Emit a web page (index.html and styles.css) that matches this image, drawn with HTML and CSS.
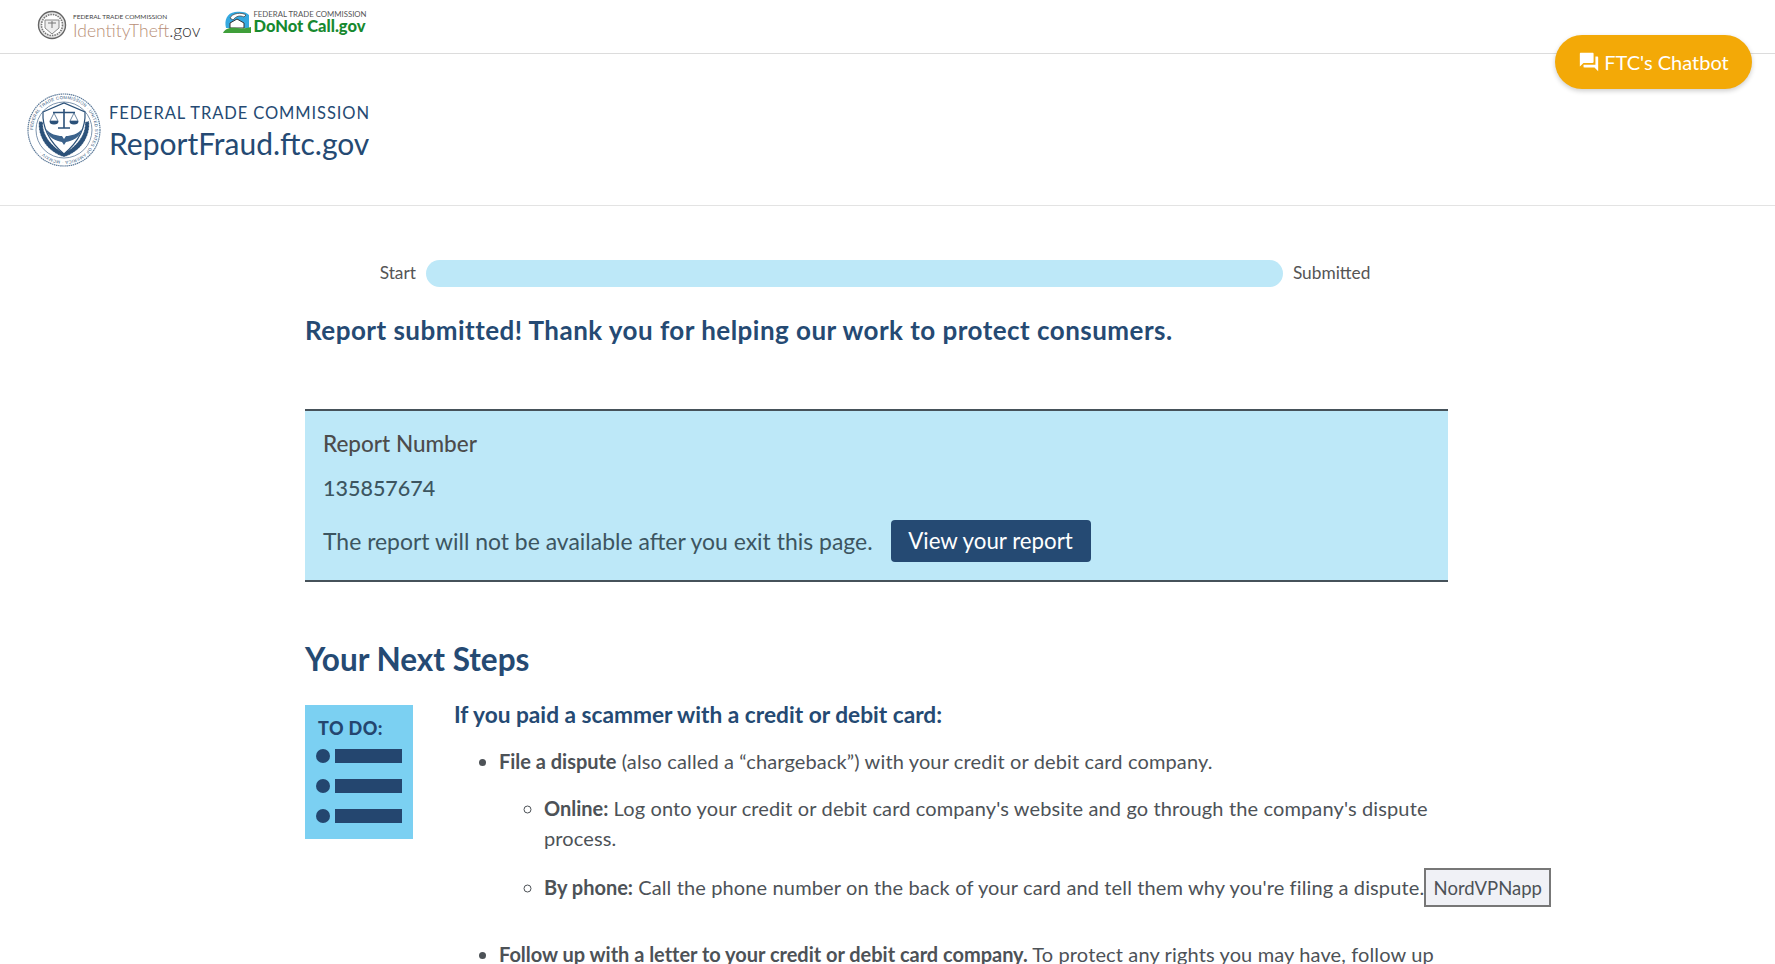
FILE: index.html
```html
<!DOCTYPE html>
<html lang="en">
<head>
<meta charset="utf-8">
<title>Report submitted | ReportFraud.ftc.gov</title>
<link rel="stylesheet" href="styles.css">
</head>
<body>
<div class="topbar">
  <a class="mini-logo it">
    <svg class="mini-seal" width="30" height="30" viewBox="0 0 30 30"><circle cx="15" cy="15" r="13.5" fill="#e6e6e6" stroke="#666" stroke-width="1.4"/><circle cx="15" cy="15" r="10.5" fill="#fff" stroke="#777" stroke-width="1.6" stroke-dasharray="1.5 1"/><path d="M8 10h14v8l-7 6-7-6z" fill="#eee" stroke="#888"/><path d="M11 13h8M15 11v7" stroke="#777"/></svg>
    <span class="mini-text"><span class="mini-ftc">FEDERAL TRADE COMMISSION</span><span class="it-name"><span class="tan">IdentityTheft</span>.gov</span></span>
  </a>
  <a class="mini-logo dnc">
    <svg width="28" height="24" viewBox="0 0 28 24"><path d="M3 18C1 10 4 3 12 2c6-1 12 0 14 3v13z" fill="#35a9e0"/><path d="M7 8c2-5 12-6 16-3l-2 2c-4-2-8-1-11 3z" fill="#fff" stroke="#333" stroke-width=".7"/><path d="M7 18v-5l7-4 7 4v5z" fill="#fff" stroke="#333"/><path d="M0 23c2-5 8-6 14-5 5 1 10 0 14-1v6z" fill="#3f9f3a"/></svg>
    <span class="mini-text"><span class="dnc-ftc">FEDERAL TRADE COMMISSION</span><span class="dnc-name">DoNot Call.gov</span></span>
  </a>
</div>

<a class="chatbot">
  <svg width="22" height="22" viewBox="0 0 24 24"><path fill="#fff" d="M21 6h-2v9H6v2c0 .55.45 1 1 1h11l4 4V7c0-.55-.45-1-1-1zm-4 6V3c0-.55-.45-1-1-1H3c-.55 0-1 .45-1 1v14l4-4h10c.55 0 1-.45 1-1z"/></svg>
  <span>FTC's Chatbot</span>
</a>

<header class="site-header">
  <svg class="seal" width="74" height="74" viewBox="0 0 74 74">
    <defs><path id="ring" d="M37 37m-31 0a31 31 0 1 1 62 0a31 31 0 1 1 -62 0"/></defs>
    <circle cx="37" cy="37" r="36" fill="#fff" stroke="#5d7a99" stroke-width="1.2" stroke-dasharray="1.5 .6"/>
    <circle cx="37" cy="37" r="28" fill="#fff" stroke="#5d7a99" stroke-width=".8"/>
    <text class="seal-ring"><textPath href="#ring">FEDERAL TRADE COMMISSION · UNITED STATES OF AMERICA · MCMXIV ·</textPath></text>
    <path d="M12 28c-2 16 9 31 25 36 16-5 27-20 25-36l-4 1c1 13-9 25-21 31-12-6-22-18-21-31z" fill="#2b5179" stroke="#fff" stroke-width=".5" stroke-dasharray="2 1"/>
    <path d="M16 19l21-9 21 9c1 17-8 31-21 42C24 50 15 36 16 19z" fill="#fff" stroke="#2b5179" stroke-width="1.2"/>
    <path d="M19 36c4 5 11 7 16 7l2 3 2-3c5 0 12-2 16-7-2 9-10 12-16 13l-2 3-2-3c-6-1-14-4-16-13z" fill="#3c638c"/>
    <path d="M37 16v19M26 19.500h22M31 35h12" stroke="#2b5179" stroke-width="1.600" fill="none"/>
    <path d="M27 20l-4 8h8zM47 20l-4 8h8z" fill="none" stroke="#2b5179" stroke-width=".7"/>
    <path d="M22.500 28a4.500 3.500 0 0 0 9 0zM42.500 28a4.500 3.500 0 0 0 9 0z" fill="#2b5179"/>
  </svg>
  <div class="brand">
    <span class="brand-ftc">FEDERAL TRADE COMMISSION</span>
    <span class="brand-name">ReportFraud.ftc.gov</span>
  </div>
</header>

<main class="content">
  <div class="progress">
    <span>Start</span>
    <div class="progress-bar"></div>
    <span>Submitted</span>
  </div>

  <h1 class="thanks">Report submitted! Thank you for helping our work to protect consumers.</h1>

  <section class="report-box">
    <p class="rb-label">Report Number</p>
    <p class="rb-number">135857674</p>
    <div class="rb-row">
      <span>The report will not be available after you exit this page.</span>
      <a class="view-btn">View your report</a>
    </div>
  </section>

  <h2 class="next">Your Next Steps</h2>

  <div class="steps">
    <div class="todo">
      <span class="todo-title">TO DO:</span>
      <div class="todo-row"><i></i><b></b></div>
      <div class="todo-row"><i></i><b></b></div>
      <div class="todo-row"><i></i><b></b></div>
    </div>
    <div class="step-body">
      <h3>If you paid a scammer with a credit or debit card:</h3>
      <ul class="l1">
        <li><strong>File a dispute</strong> (also called a “chargeback”) with your credit or debit card company.
          <ul class="l2">
            <li><strong>Online:</strong> Log onto your credit or debit card company's website and go through the company's dispute process.</li>
            <li class="phone"><strong>By phone:</strong> Call the phone number on the back of your card and tell them why you're filing a dispute.<span class="tag">NordVPNapp</span></li>
          </ul>
        </li>
        <li><strong>Follow up with a letter to your credit or debit card company.</strong> To protect any rights you may have, follow up</li>
      </ul>
    </div>
  </div>
</main>
</body>
</html>
```
FILE: styles.css
```css
* { box-sizing: border-box; }
html, body { margin: 0; height: 964px; overflow: hidden; }
body { font-family: "Lato", "Liberation Sans", sans-serif; color: #4d5257; background: #fff; font-size: 20px; line-height: 30px; position: relative; }

.topbar { height: 54px; border-bottom: 1px solid #dcdcdc; display: flex; align-items: center; padding: 0 0 3px 37px; gap: 23px; }
.mini-logo { display: flex; align-items: center; gap: 6px; }
.mini-text { display: flex; flex-direction: column; }
.it .mini-text { padding-top: 2px; }
.mini-ftc { font-size: 6.500px; line-height: 8px; color: #444; }
.it-name { font-size: 17.500px; line-height: 19px; color: #333; font-weight: 300; }
.tan { color: #b88f78; }
.dnc { gap: 2px; margin-bottom: 6px; }
.dnc-ftc { font-size: 7.800px; line-height: 9px; color: #555; }
.dnc-name { font-size: 16.500px; line-height: 15px; font-weight: 900; color: #17892f; }

.chatbot { position: absolute; left: 1555px; top: 35px; width: 197px; height: 54px; border-radius: 27px; background: #f3a907; box-shadow: 0 2px 5px rgba(0,0,0,.2); color: #fff; display: flex; align-items: center; justify-content: center; gap: 4px; font-size: 20px; padding-bottom: 1px; }

.site-header { height: 152px; border-bottom: 1px solid #e3e3e3; display: flex; align-items: center; padding: 0 0 0 27px; gap: 8px; }
.seal { display: block; }
.seal-ring { font-family: "Liberation Sans", sans-serif; font-size: 4.300px; fill: #2b5179; letter-spacing: .3px; }
.brand { display: flex; flex-direction: column; color: #254a73; padding-top: 2px; }
.brand-ftc { font-size: 16.500px; line-height: 24px; letter-spacing: .9px; }
.brand-name { font-size: 30px; line-height: 36px; }

.content { width: 1143px; margin-left: 305px; }
.progress { display: flex; align-items: center; justify-content: center; gap: 10px; height: 28px; margin-top: 53px; padding-right: 3px; font-size: 17.300px; color: #555; }
.progress-bar { width: 857px; height: 27px; border-radius: 14px; background: #bde8f8; }

.thanks { margin: 27px 0 0; font-size: 26px; line-height: 32px; font-weight: 700; color: #254a73; letter-spacing: .47px; }

.report-box { margin-top: 63px; height: 173px; border-top: 2px solid #46525a; border-bottom: 2px solid #46525a; background: #bde8f8; padding: 19px 18px 0; }
.rb-label { margin: 0; font-size: 22.500px; line-height: 28px; font-weight: 500; color: #4c4c4c; }
.rb-number { margin: 16px 0 0; font-size: 21.500px; line-height: 28px; font-weight: 500; color: #3c5560; }
.rb-row { display: flex; align-items: center; gap: 18px; margin-top: 18px; font-size: 22.950px; color: #3c5560; }
.view-btn { width: 200px; height: 42px; border-radius: 4px; background: #254a73; color: #fff; display: flex; align-items: center; justify-content: center; font-size: 22.300px; }

.next { margin: 58px 0 0; font-size: 31.500px; line-height: 38px; font-weight: 700; color: #254a73; }

.steps { display: flex; gap: 41px; margin-top: 27px; }
.todo { flex: none; width: 108px; height: 134px; background: #7bd0f2; padding: 12px 11px 0 11px; display: flex; flex-direction: column; color: #24466f; }
.todo-title { font-size: 18px; line-height: 22px; font-weight: 900; letter-spacing: .4px; padding-left: 2px; }
.todo-row { display: flex; align-items: center; gap: 5px; height: 14px; margin-bottom: 16px; }
.todo-title + .todo-row { margin-top: 10px; }
.todo-row i { width: 14px; height: 14px; border-radius: 50%; background: #24466f; }
.todo-row b { width: 67px; height: 14px; background: #24466f; }

.step-body { flex: 1; min-width: 0; letter-spacing: .13px; }
.step-body h3 { margin: -4px 0 0; font-size: 22.700px; line-height: 28px; font-weight: 700; color: #254a73; letter-spacing: 0; }
.l1 { margin: 17px 0 0; padding: 0 0 0 45px; }
.l1 > li { margin-bottom: 32px; }
.l2 { margin: 17px 0 0; padding: 0 0 0 45px; list-style: circle; }
.l2 > li { margin-bottom: 15px; }
.phone { white-space: nowrap; }
.tag { display: inline-block; vertical-align: baseline; height: 39px; width: 127px; border: 2px solid #777; background: #f0f1f6; text-align: center; line-height: 36px; color: #4d5257; font-size: 18.500px; letter-spacing: 0; }
strong { font-weight: 700; letter-spacing: -.02px; }
```
